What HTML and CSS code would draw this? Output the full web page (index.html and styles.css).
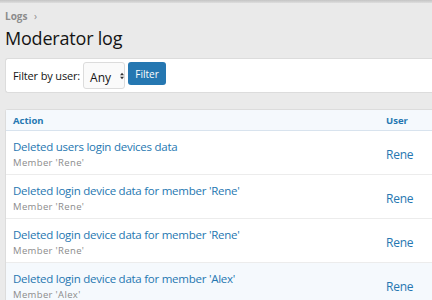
FILE: index.html
```html
<!DOCTYPE html>
<html>
    <head>
        <title>Moderator log</title>
        <link rel="stylesheet" href="styles.css">
    </head>
    <body>
        <div class="topbar"></div>
        <div class="page">
            <div class="crumbs">Logs <span class="sep">&rsaquo;</span></div>
            <h1 class="title">Moderator log</h1>

            <div class="block filter">
                <span class="label">Filter by user:</span>
                <span class="select">Any
                    <svg class="arrows" width="6" height="10" viewBox="0 0 6 10"><path d="M3 0 L6 4 L0 4 Z M0 6 L6 6 L3 10 Z" fill="#333"/></svg>
                </span>
                <button class="button">Filter</button>
            </div>

            <div class="block log">
                <div class="row head">
                    <div class="cell main">Action</div>
                    <div class="cell user">User</div>
                </div>
                <div class="row">
                    <div class="cell main">
                        <a class="action">Deleted users login devices data</a>
                        <div class="hint">Member 'Rene'</div>
                    </div>
                    <div class="cell user"><a>Rene</a></div>
                </div>
                <div class="row">
                    <div class="cell main">
                        <a class="action">Deleted login device data for member 'Rene'</a>
                        <div class="hint">Member 'Rene'</div>
                    </div>
                    <div class="cell user"><a>Rene</a></div>
                </div>
                <div class="row">
                    <div class="cell main">
                        <a class="action">Deleted login device data for member 'Rene'</a>
                        <div class="hint">Member 'Rene'</div>
                    </div>
                    <div class="cell user"><a>Rene</a></div>
                </div>
                <div class="row hover">
                    <div class="cell main">
                        <a class="action">Deleted login device data for member 'Alex'</a>
                        <div class="hint">Member 'Alex'</div>
                    </div>
                    <div class="cell user"><a>Rene</a></div>
                </div>
            </div>
        </div>
    </body>
</html>
```

FILE: styles.css
```css
body
{
    margin: 0;
    background-color: #eaeaea;
    font-family: "Open Sans", sans-serif;
    color: #141414;
    overflow: hidden;
}
.topbar
{
    height: 3px;
    background: linear-gradient(#c4c4c4, #dedede);
}
.page
{
    padding: 0 0 0 5px;
}
.crumbs
{
    margin-top: 6px;
    font-size: 10px;
    line-height: 14px;
    font-weight: bold;
    color: #8c8c8c;
}
.crumbs .sep
{
    font-weight: normal;
    margin-left: 4px;
}
.title
{
    margin: 3px 0 8px 0;
    font-size: 18px;
    font-weight: normal;
    line-height: 24px;
    letter-spacing: -0.2px;
}
.block
{
    background-color: #fff;
    border: 1px solid #dcdcdc;
    border-right: none;
    border-radius: 3px 0 0 3px;
}
.filter
{
    display: flex;
    align-items: flex-start;
    height: 35px;
    box-sizing: border-box;
    padding: 3px 0 0 7px;
    font-size: 11px;
}
.label
{
    margin-top: 6px;
    margin-right: 3px;
    letter-spacing: -0.15px;
}
.select
{
    display: flex;
    align-items: center;
    height: 27px;
    width: 42px;
    box-sizing: border-box;
    padding: 3px 0 0 6px;
    border: 1px solid #dcdcdc;
    border-radius: 3px;
    background-color: #fafafa;
    font-size: 12px;
}
.arrows
{
    margin-left: 9px;
    margin-top: -2px;
}
.button
{
    margin-left: 3px;
    height: 23px;
    width: 38px;
    border: none;
    border-radius: 3px;
    background-color: #2577b1;
    color: #fff;
    font-family: inherit;
    font-size: 10px;
    padding: 0;
}
.log
{
    margin-top: 16px;
}
.row
{
    display: flex;
    border-top: 1px solid #ececec;
    height: 43px;
    align-items: center;
}
.row.head
{
    border-top: none;
    height: 20px;
    background-color: #f5f9fd;
    border-bottom: 1px solid #d8e3ee;
    font-size: 9.5px;
    font-weight: bold;
    color: #2577b1;
}
.row.head + .row
{
    border-top: none;
}
.row.hover
{
    background-color: #f5f9fd;
}
.cell.main
{
    flex: 1;
    padding-left: 7px;
    padding-bottom: 3px;
}
.row.head .cell.main
{
    padding-bottom: 0;
}
.cell.user
{
    width: 46px;
}
.row a
{
    color: #2577b1;
    font-size: 11.5px;
    letter-spacing: -0.25px;
}
.row .cell.user a
{
    font-size: 12px;
}
.hint
{
    font-size: 9.5px;
    letter-spacing: 0.35px;
    color: #8c8c8c;
    margin-top: 0;
}
```
